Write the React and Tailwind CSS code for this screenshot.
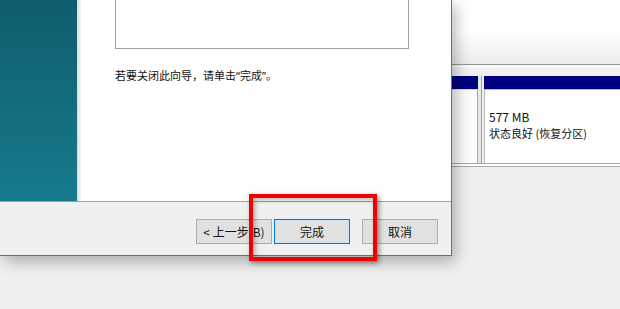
import React from "react";

const font = { fontFamily: '"Noto Sans CJK SC", "Noto Sans", sans-serif' };
const latin = { fontFamily: '"Noto Sans", sans-serif' };

const Btn = ({ children, primary }) => (
  <div
    className={`h-[25px] w-[76px] flex items-center justify-center text-[12px] text-[#111] bg-[#e1e1e1] ${
      primary ? "border border-[#0078d7] ring-1 ring-inset ring-[#cfe3f5]" : "border border-[#adadad]"
    }`}
  >
    {children}
  </div>
);

const Wizard = () => (
  <div className="relative z-10 w-[452px] h-[256px] flex flex-col border-r border-b border-[#707070] shadow-[4px_6px_14px_rgba(0,0,0,0.28)] bg-[#f0f0f0]">
    <div className="flex h-[201px]">
      <div className="w-[77px] bg-gradient-to-b from-[#0f5d6d] to-[#177b8d]" />
      <div className="w-[4px] bg-gradient-to-r from-[#dcdcdc] to-[#f4f4f4]" />
      <div className="flex-1 bg-white pl-[34px] pr-[42px]">
        <div className="h-[49px] border-x border-b border-[#a0a0a0]" />
        <p className="mt-[18px] text-[11px] leading-[16px] text-[#111]">
          若要关闭此向导，请单击<span style={latin}>“</span>完成<span style={latin}>”</span>。
        </p>
      </div>
    </div>
    <div className="flex-1 border-t border-[#a0a0a0] flex items-start pt-[17px] pl-[196px]">
      <Btn>&lt;&nbsp;上一步(B)</Btn>
      <div className="w-[2px]" />
      <Btn primary>完成</Btn>
      <div className="w-[12px]" />
      <Btn>取消</Btn>
    </div>
  </div>
);

const DiskPane = () => (
  <div className="flex-1 flex flex-col">
    <div className="h-[64px] bg-gradient-to-b from-white via-white to-[#ececec]" />
    <div className="h-[12px] border-t border-[#9a9a9a] bg-[#f0f0f0] flex flex-col">
      <div className="h-[1px] mt-[1px] bg-white" />
    </div>
    <div className="flex h-[87px]">
      <div className="w-[26px] flex flex-col">
        <div className="h-[13px] bg-[#000080]" />
        <div className="flex-1 bg-gradient-to-r from-[#f8f8f8] to-white border-r border-[#a8a8a8] border-t border-t-[#d8d8d8]" />
      </div>
      <div className="w-[6px] flex">
        <div className="w-[3px] bg-[#e8e8e8]" />
        <div className="w-[1px] bg-[#a0a0a0]" />
        <div className="w-[2px] bg-[#f0f0f0]" />
      </div>
      <div className="flex-1 flex flex-col">
        <div className="h-[13px] bg-[#000080]" />
        <div className="flex-1 bg-white border-l border-t border-[#b8b8b8] pl-[4px] pt-[19px] leading-[16px] text-[#111]">
          <div className="text-[12px]">577 MB</div>
          <div className="text-[11px]">状态良好 (恢复分区)</div>
        </div>
      </div>
    </div>
    <div className="h-[4px] border-t border-b border-[#a8a8a8] bg-white" />
    <div className="flex-1 bg-[#f0f0f0]" />
  </div>
);

export default function App() {
  return (
    <div
      className="relative w-[620px] h-[309px] overflow-hidden bg-[#f0f0f0] flex items-start"
      style={font}
    >
      <Wizard />
      <DiskPane />
      <div className="absolute left-[249px] top-[194px] w-[128px] h-[67px] border-[4px] border-[#f40000] z-20 shadow-[2px_2px_5px_rgba(0,0,0,0.45),inset_2px_2px_5px_rgba(0,0,0,0.3)]" />
    </div>
  );
}
